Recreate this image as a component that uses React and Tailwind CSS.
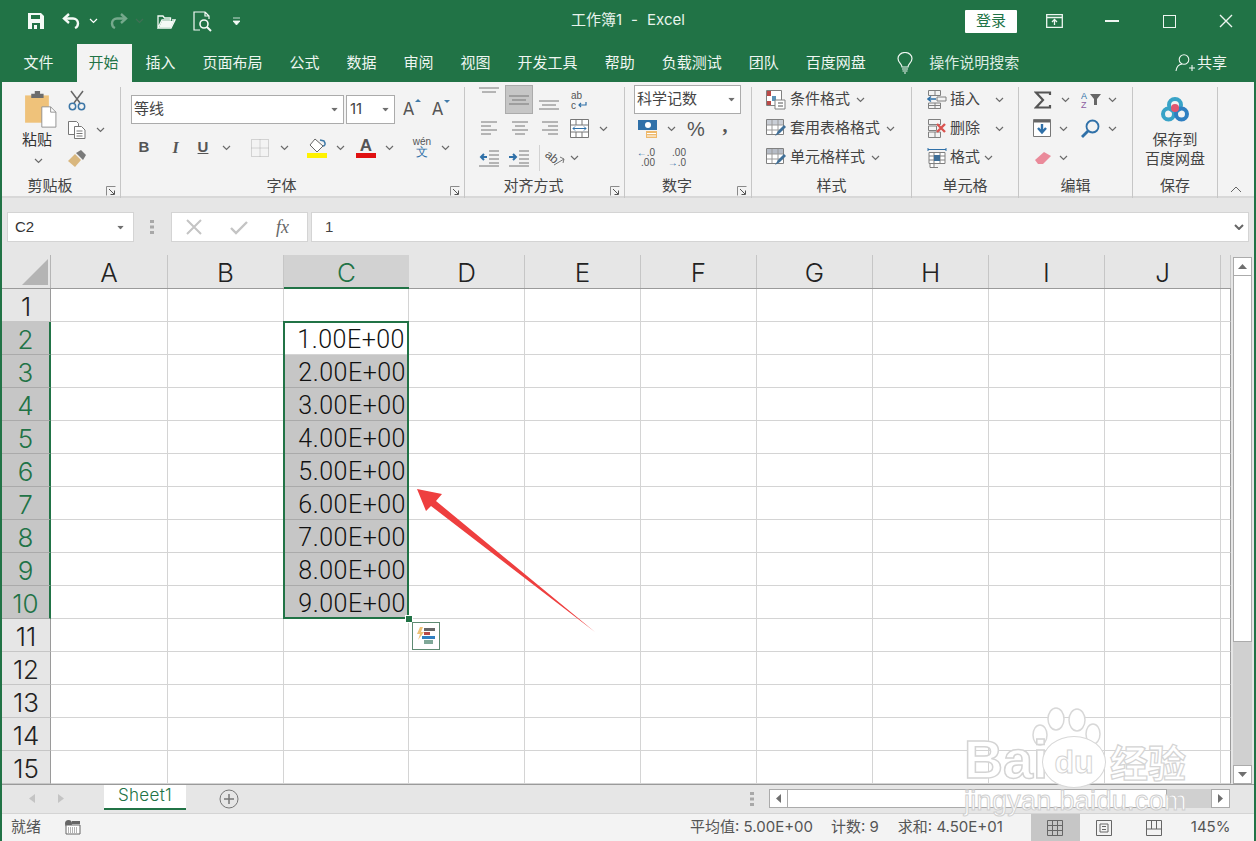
import React from 'react';

const columns = [
  { name: 'A', w: 'w-[117px]' },
  { name: 'B', w: 'w-[116px]' },
  { name: 'C', w: 'w-[125px]' },
  { name: 'D', w: 'w-[116px]' },
  { name: 'E', w: 'w-[116px]' },
  { name: 'F', w: 'w-[116px]' },
  { name: 'G', w: 'w-[116px]' },
  { name: 'H', w: 'w-[116px]' },
  { name: 'I', w: 'w-[116px]' },
  { name: 'J', w: 'w-[116px]' },
  { name: '', w: 'w-[10px]' },
];
const rows = Array.from({ length: 15 }, (_, i) => i + 1);

const Chev = ({ className = 'mx-auto' }) => (
  <svg width="9" height="6" viewBox="0 0 9 6" className={className}>
    <path d="M1 1l3.5 3.5L8 1" fill="none" stroke="#6b6b6b" strokeWidth="1.2" />
  </svg>
);

const Caret = ({ className = '' }) => (
  <svg width="9" height="5" viewBox="0 0 9 5" className={className}>
    <path d="M0 0h9L4.5 5z" fill="#6f6f6f" />
  </svg>
);

const Launcher = () => (
  <svg width="10" height="10" viewBox="0 0 10 10">
    <path d="M.5 9.5v-9h9" fill="none" stroke="#8a8a8a" />
    <path d="M3 3l5 5M8.5 4.5v4h-4" fill="none" stroke="#555" />
  </svg>
);

const Lines = ({ kind }) => {
  const sets = {
    top: ['M0 1h20', 'M3 5h14'],
    mid: ['M0 6h20', 'M3 10h14', 'M0 14h20'],
    bot: ['M0 10h20', 'M3 14h14', 'M0 18h20'],
    left: ['M0 3h16', 'M0 7h10', 'M0 11h16', 'M0 15h10'],
    center: ['M0 3h16', 'M3 7h10', 'M0 11h16', 'M3 15h10'],
    right: ['M0 3h16', 'M6 7h10', 'M0 11h16', 'M6 15h10'],
  };
  return (
    <svg width="20" height="20" viewBox="0 0 20 20">
      {sets[kind].map((d) => (
        <path key={d} d={d} stroke="#777" strokeWidth="1" fill="none" />
      ))}
    </svg>
  );
};

const Indent = ({ out }) => (
  <svg width="20" height="18" viewBox="0 0 20 18">
    <path d="M10 2h10M10 6h10M10 10h10M10 14h10M0 17h20" stroke="#777" fill="none" />
    <path d={out ? 'M8 8H2M5 5L2 8l3 3' : 'M0 8h7M4 5l3 3-3 3'} stroke="#2f70a8" strokeWidth="2" fill="none" />
  </svg>
);

const Table = ({ fill = '#c9ced6' }) => (
  <svg width="20" height="19" viewBox="0 0 20 19">
    <path d="M.5.5h17v15H.5z" fill="#fff" stroke="#808080" />
    <path d="M1 1h16v5H1z" fill={fill} />
    <path d="M6 1v14M12 1v14M1 6h16M1 11h16" stroke="#9a9a9a" />
    <path d="M9 17l3-5 6-6 2 2-6 6z" fill="#3f6f98" />
  </svg>
);

const Group = ({ w, label, launcher, children }) => (
  <div className={`${w} h-[111px] flex flex-col border-r border-[#c6c6c6]`}>
    <div className="-mt-[2px] h-[89px] flex flex-col">{children}</div>
    <div className={`relative flex-1 flex items-center justify-center text-[15px] text-[#444] pt-[1px] ${launcher ? 'pr-[22px]' : ''}`}>
      {label}
      {launcher && (
        <span className="absolute right-[4px] bottom-[2px] flex">
          <Launcher />
        </span>
      )}
    </div>
  </div>
);

const Row = ({ className = '', children }) => (
  <div className={`h-[29px] flex items-center ${className}`}>{children}</div>
);

const Sep = () => <span className="w-px h-[26px] bg-[#d2d2d2]" />;

const Tab = ({ children, className = 'px-[13.5px]' }) => (
  <span className={`${className} h-[38px] flex items-center text-[15px] text-[#eef6f1]`}>{children}</span>
);

const StyleRow = ({ icon, text }) => (
  <Row className="pl-[13px] gap-[3px] text-[15px] text-[#444]">
    <span className="w-[22px] flex justify-center">{icon}</span>
    <span>{text}</span>
    <Chev className="ml-[3px]" />
  </Row>
);

const CellRow = ({ icon, text, wide }) => (
  <Row className="pl-[14px] gap-[3px] text-[15px] text-[#444]">
    <span className="w-[21px] flex justify-center">{icon}</span>
    <span>{text}</span>
    <Chev className={wide ? 'ml-[12px]' : 'ml-[1px]'} />
  </Row>
);

function TitleBar() {
  return (
    <div className="h-[42px] bg-[#217346] flex items-center relative">
      <div className="flex items-center h-full">
        <span className="w-[72px] pl-[28px] flex">
          <svg width="16" height="16" viewBox="0 0 16 16">
            <path d="M0 0h13l3 3v13H0z" fill="#f4faf6" />
            <path d="M3 2h9v4H3z" fill="#217346" />
            <path d="M4 10h8v6H4z" fill="#217346" />
            <path d="M6 12h3v4H6z" fill="#f4faf6" />
          </svg>
        </span>
        <svg width="20" height="17" viewBox="0 0 20 17" className="-ml-[10px]">
          <path d="M7 1L2 5.5 7 10" fill="none" stroke="#f4faf6" strokeWidth="2.4" />
          <path d="M3 5.5h8a5 5 0 0 1 5 5 5 5 0 0 1-3 4.5" fill="none" stroke="#f4faf6" strokeWidth="2.4" />
        </svg>
        <Chev className="ml-[7px] brightness-[3]" />
        <svg width="20" height="17" viewBox="0 0 20 17" className="ml-[10px] opacity-40">
          <path d="M13 1l5 4.5L13 10" fill="none" stroke="#f4faf6" strokeWidth="2.4" />
          <path d="M17 5.5H9a5 5 0 0 0-5 5 5 5 0 0 0 3 4.5" fill="none" stroke="#f4faf6" strokeWidth="2.4" />
        </svg>
        <Chev className="ml-[7px] opacity-40" />
        <svg width="19" height="15" viewBox="0 0 19 15" className="ml-[13px]">
          <path d="M1 14V2h5l1.500 2h6v2H5L1 14h13l4-8h-3" fill="#217346" stroke="#f4faf6" strokeWidth="1.300" />
          <path d="M5 7h12l-3 6.500H2z" fill="#f4faf6" />
        </svg>
        <svg width="19" height="21" viewBox="0 0 19 21" className="ml-[17px]">
          <path d="M12 1H1v18h6M12 1l4 4v3M12 1v4h4" fill="none" stroke="#f4faf6" strokeWidth="1.200" />
          <circle cx="11" cy="13" r="4" fill="none" stroke="#f4faf6" strokeWidth="1.600" />
          <path d="M14 16l4 4" stroke="#f4faf6" strokeWidth="2" />
        </svg>
        <svg width="7" height="8" viewBox="0 0 7 8" className="ml-[21px]">
          <path d="M0 1h7M0 4h7L3.500 8z" stroke="#f4faf6" fill="#f4faf6" strokeWidth=".8" />
        </svg>
      </div>
      <span className="absolute left-[571px] top-[11px] flex gap-[9px] text-[15px] text-[#e8f3ec] leading-[18px]">
        <span>工作簿1</span>
        <span>-</span>
        <span>Excel</span>
      </span>
      <div className="ml-auto flex items-center h-full">
        <span className="w-[52px] h-[23px] bg-white rounded-[1px] flex items-center justify-center text-[15px] text-[#217346]">登录</span>
        <svg width="17" height="14" viewBox="0 0 17 14" className="ml-[29px]">
          <path d="M.7.7h15.600v12.600H.7zM1 3.500h15" fill="none" stroke="#eef6f1" strokeWidth="1.300" />
          <path d="M8.500 11V6M6 8l2.500-2.500L11 8" fill="none" stroke="#eef6f1" strokeWidth="1.300" />
        </svg>
        <span className="ml-[42px] w-[14px] h-[2px] bg-[#eef6f1]" />
        <span className="ml-[44px] w-[13px] h-[13px] border-[1.5px] border-[#eef6f1]" />
        <svg width="14" height="14" viewBox="0 0 14 14" className="ml-[43px] mr-[23px]">
          <path d="M1 1l12 12M13 1L1 13" stroke="#eef6f1" strokeWidth="1.400" />
        </svg>
      </div>
    </div>
  );
}

function TabBar() {
  return (
    <div className="h-[40px] bg-[#217346] flex items-end relative pl-[10px]">
      <Tab>文件</Tab>
      <span className="ml-[9.500px] w-[55px] h-[38px] bg-[#f3f3f3] flex items-center pl-[12px] text-[15px] text-[#217346]">开始</span>
      <Tab className="pl-[14px] pr-[13.500px]">插入</Tab>
      <Tab>页面布局</Tab>
      <Tab>公式</Tab>
      <Tab>数据</Tab>
      <Tab>审阅</Tab>
      <Tab>视图</Tab>
      <Tab>开发工具</Tab>
      <Tab>帮助</Tab>
      <Tab>负载测试</Tab>
      <Tab>团队</Tab>
      <Tab>百度网盘</Tab>
      <span className="ml-[18px] h-[38px] flex items-center">
        <svg width="16" height="22" viewBox="0 0 16 22">
          <path d="M5 15c0-3-4-4.500-4-8.500a7 6 0 0 1 14 0C15 10.500 11 12 11 15z" fill="none" stroke="#eef6f1" strokeWidth="1.200" />
          <path d="M5 17h6M5.500 19h5M7 21h2" stroke="#eef6f1" strokeWidth="1.200" />
        </svg>
      </span>
      <span className="ml-[16px] h-[38px] flex items-center text-[15px] text-[#dcece3]">操作说明搜索</span>
      <span className="ml-auto mr-[29px] h-[38px] flex items-center gap-[2px] text-[15px] text-[#eef6f1]">
        <svg width="20" height="20" viewBox="0 0 20 20">
          <circle cx="9" cy="6.500" r="4.800" fill="none" stroke="#eef6f1" strokeWidth="1.100" />
          <path d="M1 18c.5-4 3-6.500 6-7M14 15h6M17 12v6" fill="none" stroke="#eef6f1" strokeWidth="1.100" />
        </svg>
        共享
      </span>
    </div>
  );
}

function Ribbon() {
  return (
    <div className="h-[116px] bg-[#f3f3f3] border-b-2 border-[#d8d8d8] flex pt-[5px] relative">
      <Group w="w-[119px]" label="剪贴板" launcher>
        <div className="flex">
          <div className="w-[62px] pl-[21px] flex flex-col">
            <svg width="35" height="37" viewBox="0 0 37 42" className="mt-[6px]">
              <path d="M1 5h27v31H1z" fill="#efc27a" />
              <path d="M8 3h4V0h6v3h4v5H8z" fill="#6d6d6d" />
              <path d="M20 18h10l6 6v17H20z" fill="#fff" stroke="#8a8a8a" />
              <path d="M30 18v6h6" fill="none" stroke="#8a8a8a" />
            </svg>
            <span className="text-[15px] leading-[22px] -ml-[1px] mt-[1px] text-[#333] whitespace-nowrap">粘贴</span>
            <Chev className="ml-[11px] mt-[7px]" />
          </div>
          <div className="flex flex-col pt-[1px]">
            <Row className="pl-[4px]">
              <svg width="18" height="21" viewBox="0 0 18 21">
                <path d="M3 1l9 12M15 1L6 13" stroke="#666" strokeWidth="1.500" />
                <circle cx="4.500" cy="16.500" r="3.200" fill="none" stroke="#3c76a6" strokeWidth="1.500" />
                <circle cx="13.500" cy="16.500" r="3.200" fill="none" stroke="#3c76a6" strokeWidth="1.500" />
              </svg>
            </Row>
            <Row className="pl-[4px] gap-[10px]">
              <svg width="18" height="18" viewBox="0 0 18 18">
                <path d="M.5.500h8l2 2v11H.5z" fill="#fff" stroke="#777" />
                <path d="M6.500 5.500h7l3.500 3.500v8.500H6.500z" fill="#fff" stroke="#777" />
                <path d="M8.500 10h6M8.500 12.500h6M8.500 15h6" stroke="#777" />
              </svg>
              <Chev />
            </Row>
            <Row className="pl-[4px]">
              <svg width="18" height="17" viewBox="0 0 18 17">
                <path d="M0 11l7-7 6 6-6 7z" fill="#d9b77e" />
                <path d="M8 3l5-3 5 5-3 5z" fill="#7a7a7a" />
              </svg>
            </Row>
          </div>
        </div>
      </Group>

      <Group w="w-[344px]" label="字体" launcher>
        <div className="pl-[10px] pt-[10px] flex items-center h-[39px]">
          <div className="w-[213px] h-[29px] bg-white border border-[#ababab] flex items-center pl-[2px] pr-[4px] text-[15px] text-[#444]">
            等线
            <Caret className="ml-auto scale-75" />
          </div>
          <div className="w-[49px] h-[29px] ml-[2px] bg-white border border-[#ababab] flex items-center pl-[3px] pr-[4px] text-[15px] text-[#444]">
            11
            <Caret className="ml-auto scale-75" />
          </div>
          <span className="w-[29px] -ml-[1px] text-center text-[17px] text-[#555] relative">
            A
            <span className="absolute right-[2px] top-[2px] border-x-[3px] border-b-[3px] border-x-transparent border-b-[#417ba9]" />
          </span>
          <span className="w-[29px] text-center text-[17px] text-[#555] relative">
            A
            <span className="absolute right-[2px] top-[3px] border-x-[3px] border-t-[3px] border-x-transparent border-t-[#417ba9]" />
          </span>
        </div>
        <Row className="mt-[9px] pl-[13px] text-[#555]">
          <span className="w-[20px] text-center font-bold text-[15px] font-['Liberation_Sans',sans-serif]">B</span>
          <span className="w-[35px] ml-[4px] text-center font-bold italic text-[16px] font-['Liberation_Serif',serif]">I</span>
          <span className="w-[20px] text-center font-bold underline text-[15px] font-['Liberation_Sans',sans-serif]">U</span>
          <span className="w-[20px] ml-[3px]"><Chev /></span>
          <span className="ml-[3px]"><Sep /></span>
          <svg width="18" height="18" viewBox="0 0 18 18" className="ml-[12px]">
            <path d="M.5.500h17v17H.5zM9 .5v17M.5 9h17" fill="none" stroke="#b0b0b0" strokeDasharray="1 1" />
          </svg>
          <span className="w-[20px] ml-[5px]"><Chev /></span>
          <span className="ml-[3px]"><Sep /></span>
          <span className="ml-[10px] w-[20px] flex flex-col items-center">
            <svg width="20" height="15" viewBox="0 0 20 15">
              <path d="M8 1l8 7-6 6-7-7z" fill="#fff" stroke="#666" />
              <path d="M16 8c2 0 3-2 1-5l-4-1" fill="none" stroke="#417ba9" strokeWidth="1.500" />
            </svg>
            <span className="w-[20px] h-[5px] bg-[#fff200]" />
          </span>
          <span className="w-[20px] ml-[3px]"><Chev /></span>
          <span className="ml-[6px] w-[20px] flex flex-col items-center font-['Liberation_Sans',sans-serif] text-[17px] leading-[15px] font-bold text-[#555]">
            A
            <span className="w-[20px] h-[5px] bg-[#e01010]" />
          </span>
          <span className="w-[20px] ml-[3px]"><Chev /></span>
          <span className="ml-[3px]"><Sep /></span>
          <span className="ml-[10px] w-[20px] flex flex-col items-center text-[10px] leading-[9px] text-[#555] font-['Liberation_Sans',sans-serif]">
            wén
            <span className="text-[12px] leading-[12px] text-[#2f70a8]">文</span>
          </span>
          <span className="w-[20px] ml-[3px]"><Chev /></span>
        </Row>
      </Group>

      <Group w="w-[160px]" label="对齐方式" launcher>
        <Row className="pl-[14px] gap-[10px]">
          <span className="w-[20px] -mt-[6px]"><Lines kind="top" /></span>
          <span className="w-[28px] h-[29px] bg-[#c6c6c6] border border-[#ababab] -mx-[4px] flex items-center justify-center"><Lines kind="mid" /></span>
          <span className="w-[20px] mt-[2px]"><Lines kind="bot" /></span>
          <svg width="20" height="20" viewBox="0 0 20 20">
            <text x="2" y="9" fontSize="10" fill="#555" fontFamily="Liberation Sans">ab</text>
            <text x="2" y="19" fontSize="10" fill="#555" fontFamily="Liberation Sans">c</text>
            <path d="M17 12v3h-7M12 13l-2 2 2 2" fill="none" stroke="#2f70a8" strokeWidth="1.200" />
          </svg>
        </Row>
        <Row className="pl-[16px]">
          <span className="w-[31px]"><Lines kind="left" /></span>
          <span className="w-[30px]"><Lines kind="center" /></span>
          <span className="w-[28px]"><Lines kind="right" /></span>
          <svg width="19" height="19" viewBox="0 0 19 19">
            <path d="M.5.500h18v18H.5zM.5 6h18M.5 13h18M6 .5V6M12 .5V6M6 13v5M12 13v5" fill="#fff" stroke="#777" />
            <path d="M3 9.500h13M5 7.500l-2 2 2 2M14 7.500l2 2-2 2" fill="none" stroke="#2f70a8" />
          </svg>
          <span className="w-[20px] ml-[4px]"><Chev /></span>
        </Row>
        <Row className="pl-[14px]">
          <span className="w-[30px]"><Indent out /></span>
          <span className="w-[30px]"><Indent /></span>
          <Sep />
          <span className="ml-[6px] w-[22px] h-[20px] relative text-[12px] leading-[14px] text-[#555] font-['Liberation_Sans',sans-serif]">
            <span className="block rotate-[40deg] origin-left pl-[1px] -mt-[3px]">ab</span>
            <svg width="12" height="10" viewBox="0 0 12 10" className="absolute left-[7px] top-[8px]">
              <path d="M1 9l10-6M7 1l4 2-1 4" fill="none" stroke="#777" />
            </svg>
          </span>
          <span className="w-[12px]"><Chev /></span>
        </Row>
      </Group>

      <Group w="w-[127px]" label="数字" launcher>
        <div className="pl-[9px] mb-[0px]">
          <div className="w-[107px] h-[29px] bg-white border border-[#ababab] flex items-center pl-[2px] pr-[4px] text-[15px] text-[#444]">
            科学记数
            <Caret className="ml-auto scale-75" />
          </div>
        </div>
        <Row className="pl-[13px]">
          <svg width="20" height="20" viewBox="0 0 20 20">
            <path d="M0 1h19v10H0z" fill="#2f70a8" />
            <circle cx="10" cy="6" r="3" fill="#fff" />
            <path d="M8 12h11v7H8z" fill="#eeb96c" />
            <path d="M9 14.500h9M9 17h9" stroke="#fff" />
          </svg>
          <span className="w-[20px] ml-[3px]"><Chev /></span>
          <span className="w-[30px] text-center text-[20px] text-[#555] font-['Liberation_Sans',sans-serif]">%</span>
          <span className="w-[28px] -mt-[8px] text-center text-[20px] font-bold leading-[14px] text-[#555] font-['Liberation_Serif',serif]">,</span>
        </Row>
        <Row className="pl-[9px] gap-[10px] text-[10px] leading-[10px] text-[#555] font-['Liberation_Sans',sans-serif]">
          <span className="w-[21px] text-right">
            <span className="text-[#2f70a8]">←</span>.0<br />.00
          </span>
          <span className="w-[21px] text-right">
            .00<br /><span className="text-[#2f70a8]">→</span>.0
          </span>
        </Row>
      </Group>

      <Group w="w-[160px]" label="样式">
        <StyleRow
          text="条件格式"
          icon={
            <svg width="20" height="20" viewBox="0 0 20 20">
              <path d="M.5.500h15v15H.5z" fill="#fff" stroke="#808080" />
              <path d="M1 1h4v5H1z" fill="#b94a48" />
              <path d="M6 6h4v5H6z" fill="#5b93b8" />
              <path d="M1 11h4v4H1z" fill="#b94a48" />
              <path d="M9 10h10v9H9z" fill="#fff" stroke="#808080" />
              <path d="M12 13h5M12 16h5" stroke="#555" />
            </svg>
          }
        />
        <StyleRow text="套用表格格式" icon={<Table />} />
        <StyleRow text="单元格样式" icon={<Table fill="#b6bcc6" />} />
      </Group>

      <Group w="w-[107px]" label="单元格">
        <CellRow
          text="插入"
          wide
          icon={
            <svg width="20" height="20" viewBox="0 0 20 20">
              <path d="M1.500.500h12v5h-12zM8 .5v5M1.500 13h12v5.500h-12zM8 13v5.500M1.500 15.500h12" fill="none" stroke="#808080" />
              <path d="M10 7h9v4h-9z" fill="none" stroke="#808080" />
              <path d="M9 9H1M4 6.500L1 9l3 2.500" fill="none" stroke="#2f70a8" strokeWidth="1.500" />
            </svg>
          }
        />
        <CellRow
          text="删除"
          wide
          icon={
            <svg width="20" height="20" viewBox="0 0 20 20">
              <path d="M1.500.500h12v5h-12zM1.500 13h12v5.500h-12zM8 13v5.500M1.500 7h8v4.500h-8z" fill="none" stroke="#808080" />
              <path d="M10 5l8 8M18 5l-8 8" stroke="#d9534f" strokeWidth="2.400" />
            </svg>
          }
        />
        <CellRow
          text="格式"
          icon={
            <svg width="20" height="20" viewBox="0 0 20 20">
              <path d="M2 4.500h16v11H2zM2 8h16M2 12h16M7 4.500v15M13 4.500v11M3 15.500v4h8" fill="#fff" stroke="#808080" />
              <path d="M7 7h6v6H7z" fill="#3f6f98" />
              <path d="M1 1.500h18M1 0v3M19 0v3" stroke="#2f70a8" fill="none" />
            </svg>
          }
        />
      </Group>

      <Group w="w-[114px]" label="编辑">
        <Row className="pl-[15px] text-[#555]">
          <svg width="18" height="18" viewBox="0 0 18 18">
            <path d="M16 4V1.500H2L9 9l-7 7.500h14V14" fill="none" stroke="#555" strokeWidth="2.200" />
          </svg>
          <span className="w-[22px] ml-[2px]"><Chev /></span>
          <svg width="22" height="18" viewBox="0 0 22 18" className="ml-[5px]">
            <text x="0" y="8" fontSize="9" fill="#2f70a8" fontFamily="Liberation Sans">A</text>
            <text x="0" y="17" fontSize="9" fill="#8e5ea2" fontFamily="Liberation Sans">Z</text>
            <path d="M9 3h11l-4 5v6h-3V8z" fill="#666" />
          </svg>
          <span className="w-[18px]"><Chev /></span>
        </Row>
        <Row className="pl-[14px]">
          <svg width="19" height="19" viewBox="0 0 19 19">
            <path d="M.5.500h17v17H.5z" fill="#fff" stroke="#777" />
            <path d="M1 1h16v2.500H1z" fill="#666" />
            <path d="M9 5v8M5 9l4 4.500L13 9" fill="none" stroke="#2f70a8" strokeWidth="2.400" />
          </svg>
          <span className="w-[20px] ml-[1px]"><Chev /></span>
          <svg width="20" height="20" viewBox="0 0 20 20" className="ml-[7px]">
            <circle cx="12.500" cy="7.500" r="6" fill="none" stroke="#2f70a8" strokeWidth="1.800" />
            <path d="M8 12l-6 6" stroke="#2f70a8" strokeWidth="2.800" />
          </svg>
          <span className="w-[18px] ml-[3px]"><Chev /></span>
        </Row>
        <Row className="pl-[15px]">
          <svg width="18" height="14" viewBox="0 0 18 14">
            <path d="M1 9l9-8 7 4-8 8H4z" fill="#ea8a9a" />
          </svg>
          <span className="w-[20px] ml-[1px]"><Chev /></span>
        </Row>
      </Group>

      <Group w="w-[85px]" label="保存">
        <div className="flex flex-col items-center pt-[12px] text-[15px] leading-[19px] text-[#444]">
          <svg width="28" height="25" viewBox="0 0 28 25" className="mb-[8px]">
            <circle cx="14" cy="8" r="6" fill="none" stroke="#38a3c7" strokeWidth="4" />
            <circle cx="7.500" cy="17" r="5.500" fill="none" stroke="#38a3c7" strokeWidth="4" />
            <circle cx="20.500" cy="17" r="5.500" fill="none" stroke="#2f7fc1" strokeWidth="4" />
            <circle cx="14" cy="11" r="4" fill="#e0566f" />
          </svg>
          <span>保存到</span>
          <span>百度网盘</span>
        </div>
      </Group>

      <svg width="12" height="7" viewBox="0 0 12 7" className="absolute right-[12px] bottom-[3px]">
        <path d="M1 6l5-5 5 5" fill="none" stroke="#666" />
      </svg>
    </div>
  );
}

function FormulaBar() {
  return (
    <div className="h-[57px] bg-[#e6e6e6] flex items-center pl-[5px] pr-[5px] pt-[1px]">
      <div className="w-[127px] h-[30px] bg-white border border-[#d4d4d4] flex items-center pl-[7px] pr-[8px] text-[15px] text-[#333] font-['Liberation_Sans',sans-serif]">
        C2
        <Caret className="ml-auto scale-75" />
      </div>
      <svg width="4" height="14" viewBox="0 0 4 14" className="ml-[16px]">
        <path d="M0 0h4v3H0zM0 5.500h4v3H0zM0 11h4v3H0z" fill="#a8a8a8" />
      </svg>
      <div className="ml-[17px] w-[137px] h-[30px] bg-white border border-[#d4d4d4] flex items-center">
        <svg width="16" height="16" viewBox="0 0 16 16" className="ml-[14px]">
          <path d="M1 1l14 14M15 1L1 15" stroke="#c4c4c4" strokeWidth="2" />
        </svg>
        <svg width="18" height="15" viewBox="0 0 18 15" className="ml-[28px]">
          <path d="M1 8l5 5L17 2" fill="none" stroke="#c4c4c4" strokeWidth="2.400" />
        </svg>
        <span className="ml-[28px] text-[18px] italic text-[#666] font-['Liberation_Serif',serif]">fx</span>
      </div>
      <div className="ml-[3px] flex-1 h-[30px] bg-white border border-[#d4d4d4] flex items-center pl-[13px] pr-[4px] text-[15px] text-[#444] font-['Liberation_Sans',sans-serif]">
        1
        <svg width="10" height="6" viewBox="0 0 10 6" className="ml-auto">
          <path d="M1 1l4 4 4-4" fill="none" stroke="#666" strokeWidth="2" />
        </svg>
      </div>
    </div>
  );
}

function Sheet() {
  return (
    <div className="relative w-[1229px] bg-[#e6e6e6]">
      <div className="flex h-[34px] border-b border-[#9a9a9a]">
        <div className="w-[49px] bg-[#e6e6e6] border-r border-[#b5b5b5] flex items-end justify-end pr-[2px] pb-[3px]">
          <svg width="26" height="26" viewBox="0 0 26 26">
            <path d="M26 0v26H0z" fill="#b4b4b4" />
          </svg>
        </div>
        {columns.map((c) => (
          <div
            key={c.name || 'end'}
            className={
              c.name === 'C'
                ? `${c.w} bg-[#d2d2d2] border-b-2 -mb-px border-[#217346] flex items-center justify-center pt-[2px] text-[26px] font-light text-[#217346]`
                : `${c.w} bg-[#e6e6e6] border-r border-[#c6c6c6] flex items-center justify-center pt-[2px] text-[26px] font-light text-[#222]`
            }
          >
            {c.name}
          </div>
        ))}
      </div>
      {rows.map((r) => {
        const picked = r >= 2 && r <= 10;
        return (
          <div key={r} className="flex h-[33px]">
            <div
              className={
                picked
                  ? 'w-[49px] bg-[#c6c6c6] border-b border-[#aaa] border-r-2 border-r-[#217346] flex items-center justify-center pt-[2px] text-[26px] font-light text-[#217346]'
                  : 'w-[49px] bg-[#e6e6e6] border-b border-[#c6c6c6] border-r border-r-[#9a9a9a] flex items-center justify-center pt-[2px] text-[26px] font-light text-[#222]'
              }
            >
              {r}
            </div>
            {columns.map((c) => (
              <div
                key={c.name || 'end'}
                className={
                  c.name === 'C' && r >= 3 && r <= 10
                    ? `${c.w} bg-[#c6c6c6] border-b border-[#aaa] flex items-center justify-end pr-[3px] pt-[3px] text-[25px] font-light tracking-[0.5px] font-['Roboto',sans-serif] text-[#111]`
                    : c.name
                      ? `${c.w} bg-white border-b border-r border-[#d4d4d4] flex items-center justify-end pr-[3px] pt-[3px] text-[25px] font-light tracking-[0.5px] font-['Roboto',sans-serif] text-[#111]`
                      : `${c.w} bg-white border-b border-b-[#d4d4d4] border-r border-r-[#9a9a9a]`
                }
              >
                {c.name === 'C' && picked ? `${r - 1}.00E+00` : ''}
              </div>
            ))}
          </div>
        );
      })}

      {/* selection box, fill handle and quick analysis button */}
      <div className="absolute left-[281px] top-[66px] w-[126px] h-[298px] border-2 border-[#217346] pointer-events-none" />
      <div className="absolute left-[403px] top-[360px] w-[6px] h-[6px] bg-[#217346] border border-white box-content" />
      <div className="absolute left-[410px] top-[367px] w-[28px] h-[28px] bg-white border border-[#5e8a72] flex items-center justify-center">
        <svg width="20" height="20" viewBox="0 0 20 20">
          <path d="M4 1L1 8h3l-2 6 6-8H5l2-5z" fill="#eec277" />
          <path d="M8 2h11v3H8z" fill="#666" />
          <path d="M8 6h6v3H8z" fill="#b94a48" />
          <path d="M6 10h13v3H6z" fill="#2f7fc1" />
          <path d="M8 14h9v4H8z" fill="#7fa898" />
        </svg>
      </div>
    </div>
  );
}

function VScroll() {
  return (
    <div className="w-[23px] pl-[2px] pr-[2px] pt-[2px] bg-[#e6e6e6] flex flex-col">
      <div className="h-[19px] bg-white border border-[#ababab] flex items-center justify-center">
        <Caret className="rotate-180" />
      </div>
      <div className="h-[366px] bg-white border-x border-b border-[#ababab]" />
      <div className="flex-1 bg-[#d0d0d0]" />
      <div className="h-[19px] bg-white border border-[#ababab] flex items-center justify-center">
        <Caret />
      </div>
    </div>
  );
}

function SheetTabs() {
  return (
    <div className="h-[29px] bg-[#e6e6e6] border-t border-[#9a9a9a] flex items-start relative">
      <svg width="6" height="9" viewBox="0 0 6 9" className="ml-[27px] mt-[9px]">
        <path d="M6 0v9L0 4.500z" fill="#c4c4c4" />
      </svg>
      <svg width="6" height="9" viewBox="0 0 6 9" className="ml-[23px] mt-[9px]">
        <path d="M0 0v9l6-4.500z" fill="#c4c4c4" />
      </svg>
      <div className="ml-[40px] w-[82px] h-[25px] bg-white border-b-2 border-[#217346] flex items-center justify-center pb-[2px] text-[17px] font-light tracking-[.3px] text-[#217346]">
        Sheet1
      </div>
      <svg width="20" height="20" viewBox="0 0 20 20" className="ml-[33px] mt-[4px]">
        <circle cx="10" cy="10" r="9" fill="none" stroke="#777" />
        <path d="M10 5v10M5 10h10" stroke="#777" strokeWidth="1.500" />
      </svg>
      <svg width="4" height="14" viewBox="0 0 4 14" className="ml-[511px] mt-[7px]">
        <path d="M0 0h4v3H0zM0 5.500h4v3H0zM0 11h4v3H0z" fill="#a8a8a8" />
      </svg>
      <div className="ml-[15px] mt-[4px] flex h-[19px] w-[461px]">
        <div className="w-[19px] bg-white border border-[#ababab] flex items-center justify-center">
          <Caret className="rotate-90" />
        </div>
        <div className="w-[379px] bg-white border-y border-r border-[#ababab]" />
        <div className="flex-1 bg-[#d0d0d0]" />
        <div className="w-[19px] bg-white border border-[#ababab] flex items-center justify-center">
          <Caret className="-rotate-90" />
        </div>
      </div>
    </div>
  );
}

function StatusBar() {
  return (
    <div className="h-[28px] bg-[#f3f3f3] border-t border-[#d4d4d4] flex items-center text-[15px] text-[#555]">
      <span className="ml-[9px]">就绪</span>
      <svg width="16" height="15" viewBox="0 0 16 15" className="ml-[24px]">
        <circle cx="3.500" cy="3.500" r="3.500" fill="#666" />
        <path d="M1 5h14v9H1z" fill="#fff" stroke="#666" />
        <path d="M7 1h8v3H7z" fill="#666" />
        <path d="M3 8h10M3 10h10M3 12h10" stroke="#666" strokeDasharray="1 1" />
      </svg>
      <span className="ml-[609px] whitespace-nowrap">平均值: 5.00E+00</span>
      <span className="ml-[18px] whitespace-nowrap">计数: 9</span>
      <span className="ml-[19px] whitespace-nowrap">求和: 4.50E+01</span>
      <span className="ml-[28px] w-[49px] h-[27px] bg-[#c6c6c6] flex items-center justify-center">
        <svg width="16" height="16" viewBox="0 0 16 16">
          <path d="M.5.500h15v15H.5zM5.500.5v15M10.500.5v15M.5 5.500h15M.5 10.500h15" fill="none" stroke="#666" />
        </svg>
      </span>
      <svg width="16" height="16" viewBox="0 0 16 16" className="ml-[16px]">
        <path d="M.5.500h15v15H.5zM4 4h8v8H4zM6 6.500h4M6 9.500h4" fill="none" stroke="#666" />
      </svg>
      <svg width="16" height="16" viewBox="0 0 16 16" className="ml-[34px]">
        <path d="M.5.500h15v15H.5zM.5 9h15M5.500 .5V9M10.500 .5V9" fill="none" stroke="#666" />
      </svg>
      <span className="ml-[29px]">145%</span>
    </div>
  );
}

export default function App() {
  return (
    <div className="w-[1256px] h-[841px] relative overflow-hidden bg-[#217346] font-['Inter','Noto_Sans_CJK_SC',sans-serif]">
      <TitleBar />
      <TabBar />
      <div className="pl-[2px] pr-[2px]">
        <Ribbon />
        <FormulaBar />
        <div className="flex h-[529px]">
          <Sheet />
          <VScroll />
        </div>
        <SheetTabs />
        <StatusBar />
      </div>

      {/* red arrow drawn on top of the screenshot */}
      <svg width="1256" height="841" viewBox="0 0 1256 841" className="absolute left-0 top-0 pointer-events-none">
        <path d="M417 489l25 5-6 7 159 131-164-126-5 5z" fill="#ee3f3f" />
      </svg>

      {/* watermark */}
      <div className="absolute left-[964px] top-[706px] w-[230px] h-[112px] pointer-events-none">
        <svg width="80" height="60" viewBox="0 0 80 60" className="absolute left-[66px] top-0">
          <ellipse cx="26" cy="13" rx="8" ry="11" fill="#fff" stroke="#d8d8d8" strokeWidth="1.500" />
          <ellipse cx="47" cy="14" rx="8" ry="11" fill="#fff" stroke="#d8d8d8" strokeWidth="1.500" />
          <ellipse cx="10" cy="29" rx="7" ry="10" fill="#fff" stroke="#d8d8d8" strokeWidth="1.500" />
          <ellipse cx="63" cy="28" rx="7" ry="10" fill="#fff" stroke="#d8d8d8" strokeWidth="1.500" />
        </svg>
        <span className="absolute left-0 top-[31px] text-[54px] leading-[44px] font-bold text-white [-webkit-text-stroke:1.5px_#d4d4d4] font-['Liberation_Sans',sans-serif]">Bai</span>
        <span className="absolute left-[78px] top-[30px] w-[64px] h-[52px] rounded-[50%] bg-white border-[1.5px] border-[#d8d8d8] flex items-center justify-center text-[32px] font-bold text-white [-webkit-text-stroke:1px_#d4d4d4] font-['Liberation_Sans',sans-serif]">du</span>
        <span className="absolute left-[146px] top-[35px] text-[38px] leading-[44px] font-bold text-white [-webkit-text-stroke:1.2px_#d4d4d4]">经验</span>
        <span className="absolute left-0 top-[80px] text-[27px] leading-[30px] text-white [-webkit-text-stroke:1px_#cfcfcf] font-['Liberation_Sans',sans-serif] tracking-[.3px]">jingyan.baidu.com</span>
      </div>
    </div>
  );
}
